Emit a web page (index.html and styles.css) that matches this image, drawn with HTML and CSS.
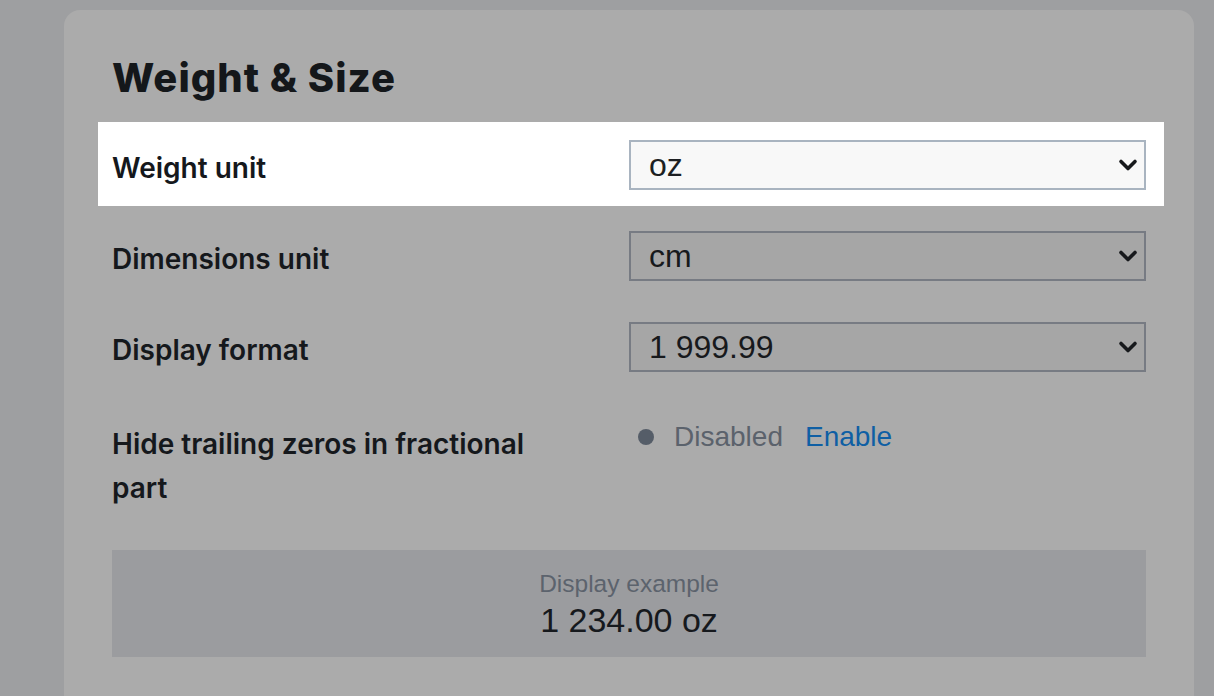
FILE: index.html
```html
<!DOCTYPE html>
<html lang="en">
<head>
<meta charset="utf-8">
<title>Weight &amp; Size</title>
<link rel="stylesheet" href="styles.css">
</head>
<body>
<div class="card">
  <h1 class="title">Weight &amp; Size</h1>

  <div class="row row-active">
    <div class="label">Weight unit</div>
    <div class="select select-active">
      <span class="select-value">oz</span>
      <svg class="chevron" width="22" height="14" viewBox="0 0 22 14"><path d="M4 3.5 L11 10.5 L18 3.5" fill="none" stroke="currentColor" stroke-width="3.6" stroke-linecap="round" stroke-linejoin="round"/></svg>
    </div>
  </div>

  <div class="row">
    <div class="label">Dimensions unit</div>
    <div class="select">
      <span class="select-value">cm</span>
      <svg class="chevron" width="22" height="14" viewBox="0 0 22 14"><path d="M4 3.5 L11 10.5 L18 3.5" fill="none" stroke="currentColor" stroke-width="3.6" stroke-linecap="round" stroke-linejoin="round"/></svg>
    </div>
  </div>

  <div class="row">
    <div class="label">Display format</div>
    <div class="select">
      <span class="select-value">1 999.99</span>
      <svg class="chevron" width="22" height="14" viewBox="0 0 22 14"><path d="M4 3.5 L11 10.5 L18 3.5" fill="none" stroke="currentColor" stroke-width="3.6" stroke-linecap="round" stroke-linejoin="round"/></svg>
    </div>
  </div>

  <div class="row">
    <div class="label label-wrap">Hide trailing zeros in fractional part</div>
    <div class="status">
      <span class="dot"></span>
      <span class="status-text">Disabled</span>
      <a class="status-link" href="#">Enable</a>
    </div>
  </div>

  <div class="example">
    <div class="example-label">Display example</div>
    <div class="example-value">1 234.00 oz</div>
  </div>
</div>
</body>
</html>
```

FILE: styles.css
```css
html, body {
  margin: 0;
  padding: 0;
}

body {
  background: #9e9fa1;
  font-family: "Liberation Sans", Arial, sans-serif;
  color: #15181c;
  height: 696px;
  overflow: hidden;
}

.card {
  margin: 10px 0 0 64px;
  width: 1130px;
  min-height: 700px;
  box-sizing: border-box;
  padding: 45px 48px 40px;
  background: #ababab;
  border-radius: 16px 16px 0 0;
}

.title {
  margin: 0 0 21px;
  font-family: Inter, "Noto Sans", sans-serif;
  font-weight: 800;
  font-size: 40px;
  line-height: 46px;
  letter-spacing: 1px;
  color: #14171a;
}

.row {
  display: grid;
  grid-template-columns: 1fr 517px;
  margin: 0 -18px 7px -14px;
  padding: 18px 18px 16px 14px;
}

.row-active {
  background: #ffffff;
}

.label {
  font-family: Inter, "Noto Sans", sans-serif;
  font-weight: 600;
  font-size: 28px;
  line-height: 44px;
  padding-top: 6px;
  color: #15181c;
}

.label-wrap {
  padding-top: 9px;
  padding-right: 70px;
}

.select {
  height: 50px;
  box-sizing: border-box;
  display: flex;
  align-items: center;
  justify-content: space-between;
  padding: 0 5px 0 18px;
  border: 2px solid #777b83;
  background: #a6a6a6;
  color: #17191c;
}

.select-active {
  border-color: #a9b4c0;
  background: #f8f8f8;
  color: #1d1f22;
}

.select-value {
  font-size: 32px;
  line-height: 1;
}

.chevron {
  display: block;
  color: #17191c;
}

.status {
  display: flex;
  align-items: center;
  height: 44px;
  padding-top: 2px;
  padding-left: 9px;
  font-size: 28px;
}

.dot {
  width: 16px;
  height: 16px;
  border-radius: 50%;
  background: #555d68;
  margin-right: 20px;
}

.status-text {
  color: #5b626c;
  margin-right: 22px;
}

.status-link {
  color: #0f5fa4;
  text-decoration: none;
}

.example {
  margin-top: 24px;
  background: #9b9c9f;
  padding: 20px 0 15px;
  text-align: center;
}

.example-label {
  font-size: 24.5px;
  line-height: 28px;
  color: #5c636d;
}

.example-value {
  font-size: 34px;
  line-height: 44px;
  color: #16191d;
}
```
